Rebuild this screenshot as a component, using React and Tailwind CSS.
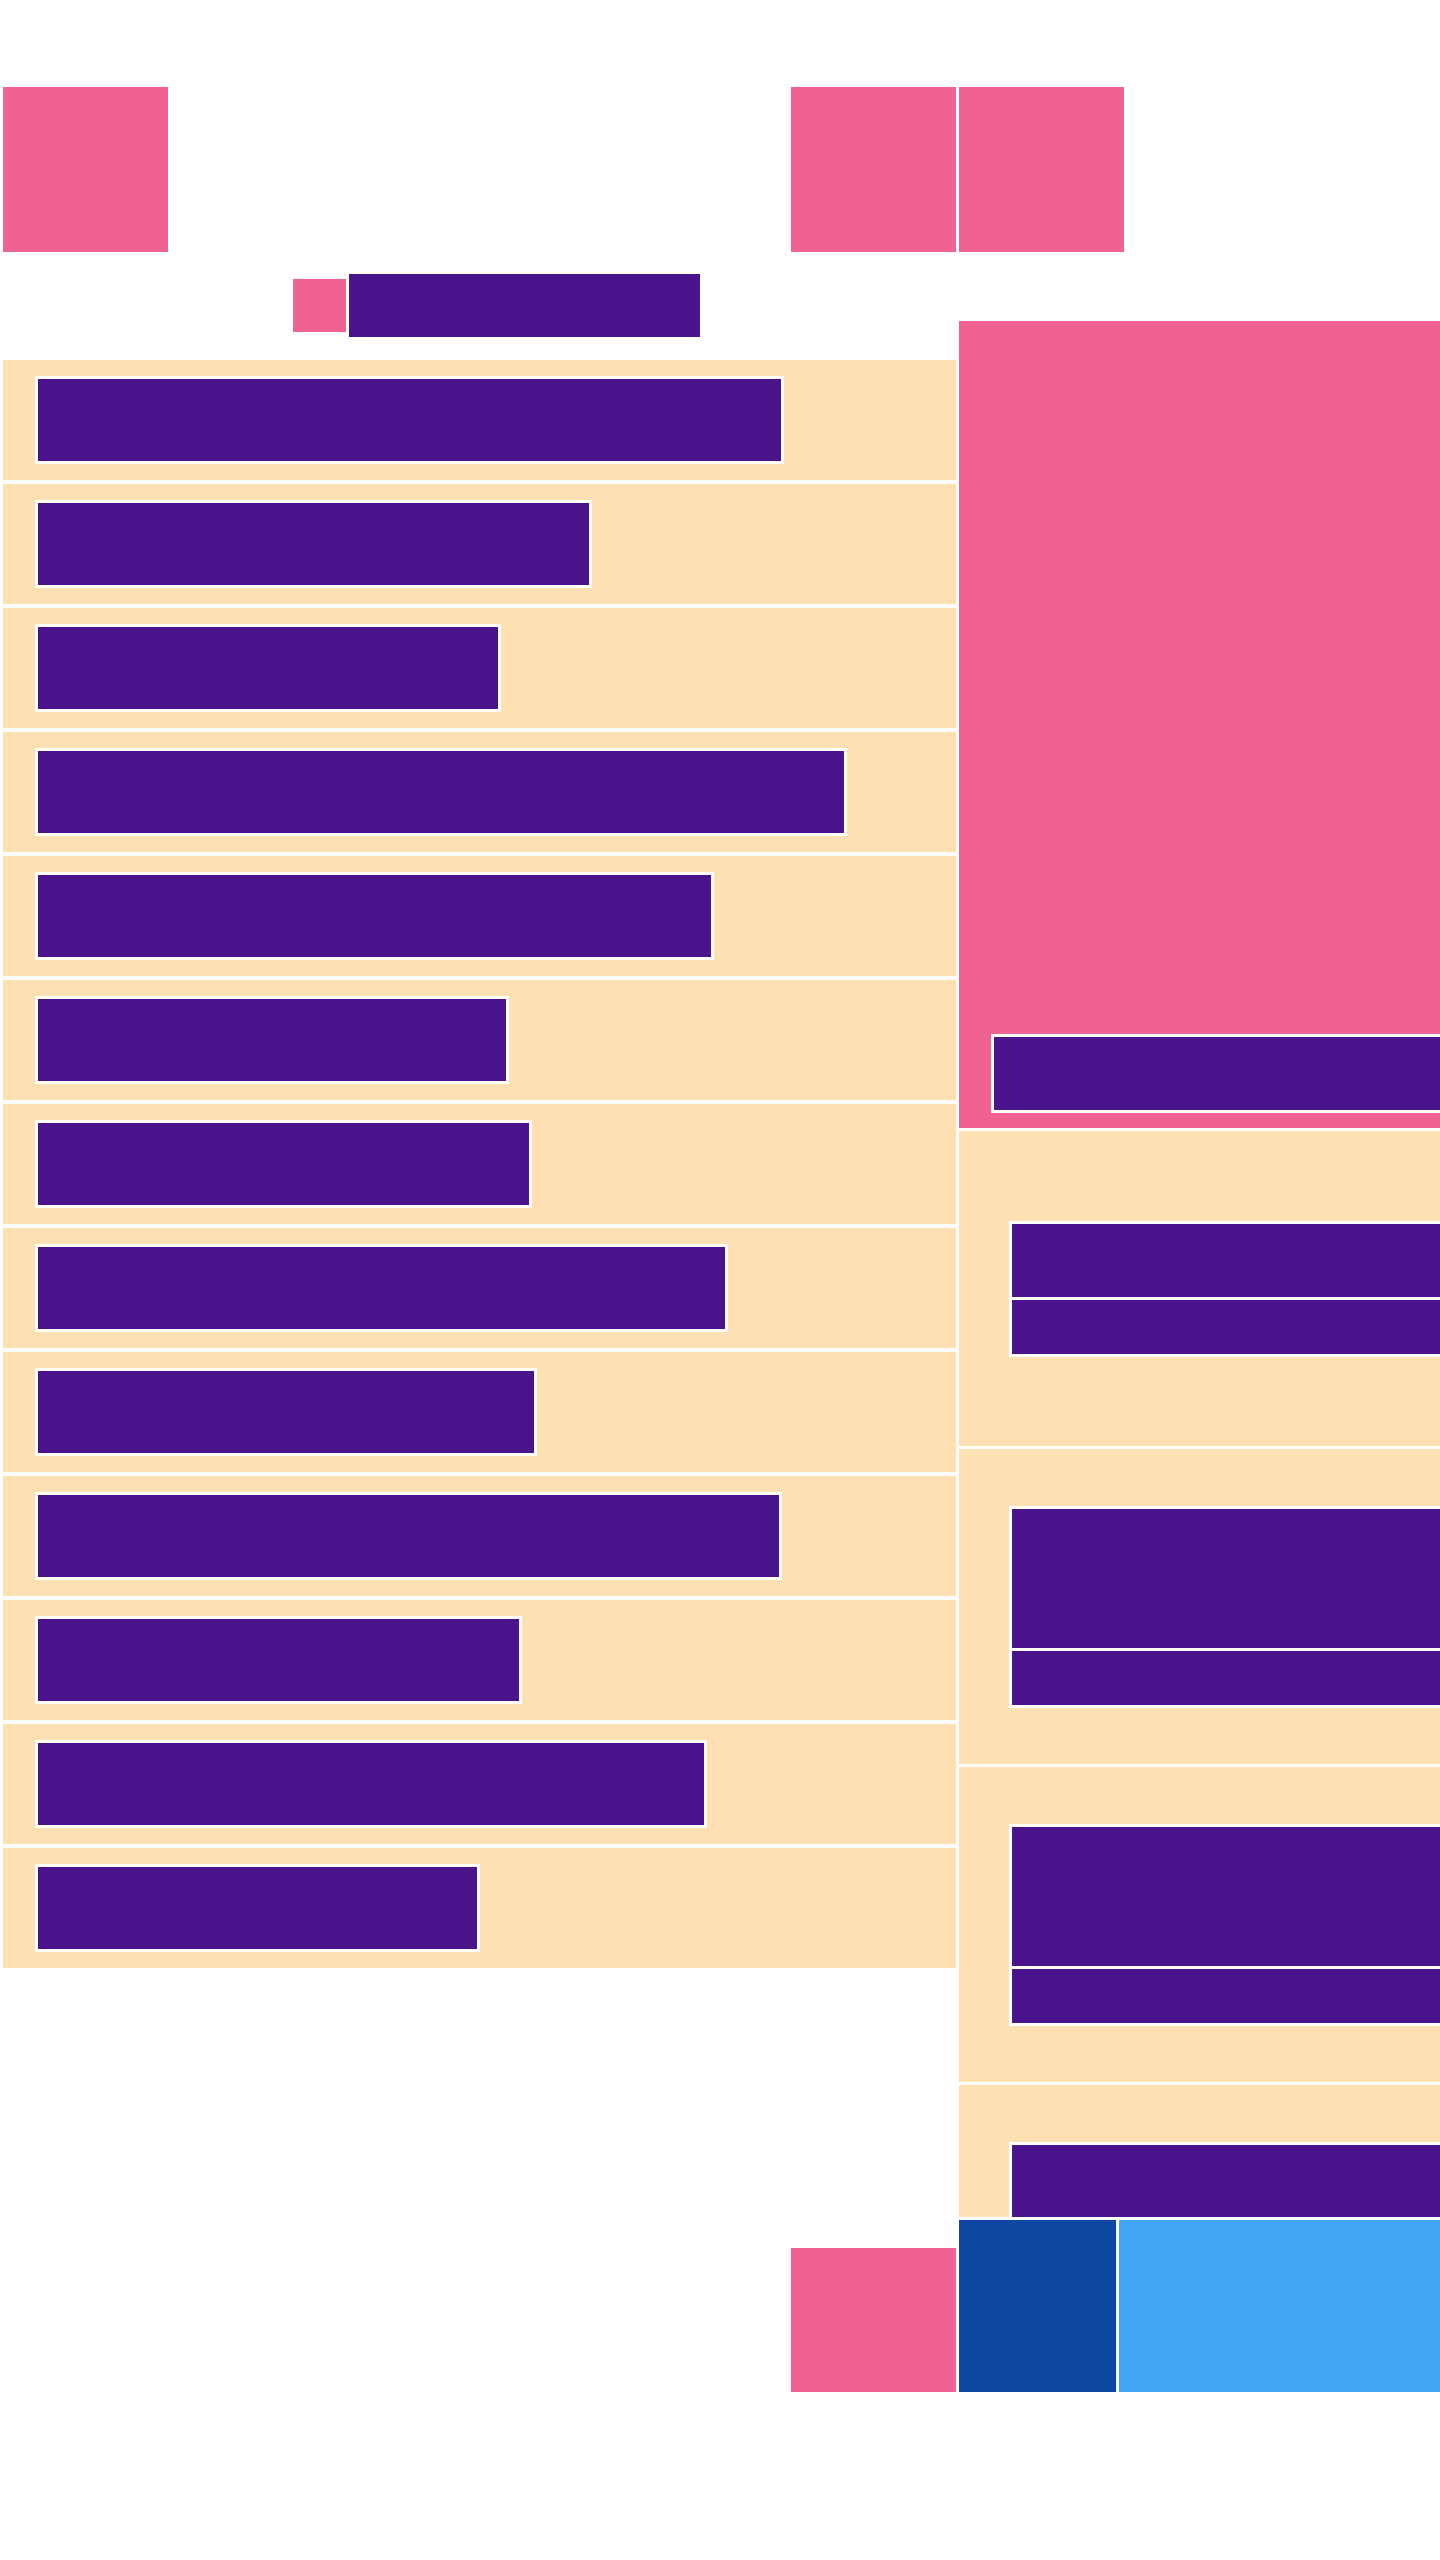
import React from "react";

// outer widths (incl. 3px white border) of the purple bars in the left list
const rowWidths = [749, 557, 466, 812, 679, 474, 497, 693, 502, 747, 487, 672, 445];

// right column cards: height of the first purple block (1 or 2 lines)
const cards = [73, 139, 139, 139];

function Bar({ w }) {
  return (
    <div
      className="h-[88px] border-[3px] border-white bg-[#4A148C] shrink-0"
      style={{ width: w }}
    />
  );
}

function Card({ top }) {
  return (
    <div className="h-[315px] shrink-0 bg-[#FFE0B2] flex items-center pl-[50px] overflow-hidden">
      <div className="w-[640px] shrink-0 border-[3px] border-white bg-white flex flex-col gap-[3px]">
        <div className="bg-[#4A148C]" style={{ height: top }} />
        <div className="h-[54px] bg-[#4A148C]" />
      </div>
    </div>
  );
}

export default function App() {
  return (
    <div className="w-[1440px] min-h-[2560px] bg-white overflow-hidden">
      <div className="grid grid-cols-[953px_481px] gap-x-[3px] pl-[3px] pt-[87px] items-start">
        {/* Left column */}
        <div className="flex flex-col">
          <div className="flex justify-between">
            <div className="w-[165px] h-[165px] bg-[#F06292]" />
            <div className="w-[165px] h-[165px] bg-[#F06292]" />
          </div>

          <div className="mt-[22px] pl-[290px] flex items-center gap-[3px]">
            <div className="w-[53px] h-[53px] bg-[#F06292]" />
            <div className="w-[351px] h-[63px] bg-[#4A148C]" />
          </div>

          <div className="mt-[23px] flex flex-col gap-1">
            {rowWidths.map((w, i) => (
              <div key={i} className="h-[120px] bg-[#FFE0B2] pl-8 py-4">
                <Bar w={w} />
              </div>
            ))}
          </div>

          <div className="mt-[280px] self-end w-[165px] h-[144px] bg-[#F06292]" />
        </div>

        {/* Right column */}
        <div className="flex flex-col overflow-hidden">
          <div className="w-[165px] h-[165px] bg-[#F06292]" />

          <div className="mt-[69px] h-[807px] bg-[#F06292] flex flex-col justify-end pl-8 pb-[15px] overflow-hidden">
            <div className="w-[640px] h-[79px] shrink-0 border-[3px] border-white bg-[#4A148C]" />
          </div>

          <div className="mt-[3px] h-[1086px] flex flex-col gap-[3px] overflow-hidden">
            {cards.map((h, i) => (
              <Card key={i} top={h} />
            ))}
          </div>

          <div className="mt-[3px] h-[172px] flex gap-[3px]">
            <div className="w-[157px] bg-[#0D47A1]" />
            <div className="flex-1 bg-[#42A5F5]" />
          </div>
        </div>
      </div>
    </div>
  );
}
